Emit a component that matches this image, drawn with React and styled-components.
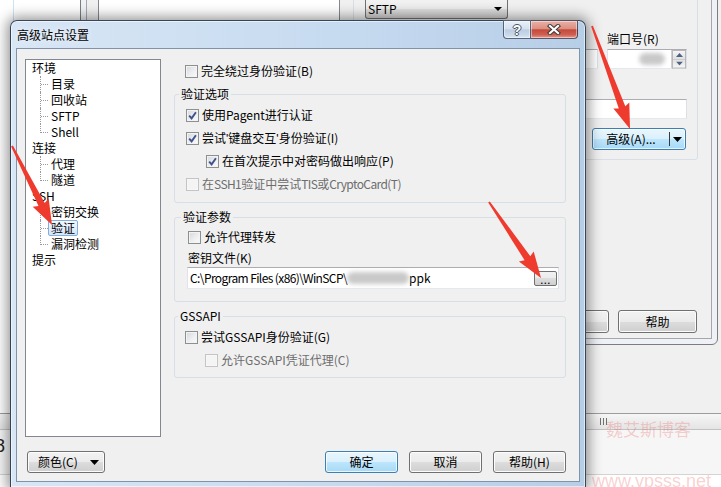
import React from "react";
import styled, { createGlobalStyle } from "styled-components";

const GlobalStyle = createGlobalStyle`
  html, body {
    margin: 0;
    padding: 0;
  }
  body {
    width: 721px;
    height: 487px;
    overflow: hidden;
    background: #fff;
    font-family: "Noto Sans CJK SC", "Noto Sans", sans-serif;
    font-size: 12px;
    line-height: 16px;
    color: #000;
  }
  * {
    box-sizing: border-box;
  }
`;

const Desktop = styled.div`
  position: relative;
  width: 721px;
  height: 487px;
  overflow: hidden;
  background: #fff;
`;

/* ---------- main WinSCP window behind everything ---------- */

const MainWindow = styled.div`
  position: absolute;
  inset: 0;
  display: grid;
  grid-template-rows: 413px 17px 45px 1fr;
`;

const FileArea = styled.div`
  display: grid;
  grid-template-columns: 586px 1fr;
`;

const FileList = styled.div`
  background: #fff;
  padding-left: 13px;
`;

const ColumnEdge = styled.div`
  height: 100%;
  border-left: 1px solid #cfe2f6;
`;

const SidePane = styled.div`
  background: #f0f0f0;
`;

const HScroll = styled.div`
  display: flex;
  align-items: center;
  padding-left: 600px;
  background: linear-gradient(#f6f6f6, #e4e4e4);
  border-top: 1px solid #9c9c9c;
  border-bottom: 1px solid #c2c2c2;
`;

const Grip = styled.span`
  width: 7px;
  height: 7px;
  background: repeating-linear-gradient(to right, #707070 0 1px, transparent 1px 3px);
`;

const StatusBand = styled.div`
  background: #f6f6f6;
  border-bottom: 1px solid #d4d4d4;
  padding-top: 6px;
  font-family: "Liberation Sans", sans-serif;
  font-size: 18px;
  line-height: 20px;
  color: #222;

  span {
    margin-left: -5px;
  }
`;

/* ---------- login dialog (inactive, behind) ---------- */

const LoginFrame = styled.div`
  position: absolute;
  left: 80px;
  top: -40px;
  width: 638px;
  height: 385px;
  padding: 29px 5px 5px;
  display: flex;
  border: 1px solid #7d7d7d;
  border-radius: 6px;
  background: #eef2f7;
`;

const LoginClient = styled.div`
  flex: 1;
  display: flex;
  flex-direction: column;
  border: 1px solid #a7a7a7;
  background: #f0f0f0;
`;

const LoginBody = styled.div`
  flex: 1;
  display: flex;
  align-items: flex-start;
`;

const SiteList = styled.div`
  width: 242px;
  height: 300px;
  margin-left: 11px;
  background: #fff;
  border: 1px solid #828790;
`;

const SessionGroup = styled.div`
  width: 345px;
  margin-left: 13px;
  padding: 8px 10px 9px 11px;
  border: 1px solid #d5dfe5;
  border-radius: 3px;
  display: flex;
  flex-direction: column;
`;

const FieldRow = styled.div`
  display: grid;
  grid-template-columns: ${(p) => p.$cols};
  column-gap: 9px;
  margin-top: ${(p) => p.$top || 0}px;
`;

const FieldLabel = styled.div`
  height: 16px;
  white-space: nowrap;
`;

const Edit = styled.div`
  height: 20px;
  display: flex;
  align-items: center;
  background: #fff;
  border: 1px solid;
  border-color: #abadb3 #dbdfe6 #e3e9ef #e2e3ea;
  padding-left: 2px;
`;

const Smudge = styled.span`
  display: inline-block;
  width: ${(p) => p.$w}px;
  height: 12px;
  margin-left: ${(p) => p.$ml || 0}px;
  border-radius: 6px;
  background: #c9c9c9;
  filter: blur(2px);
`;

const SpinButtons = styled.div`
  margin-left: auto;
  width: 15px;
  height: 100%;
  display: flex;
  flex-direction: column;
  border-left: 1px solid #d0d0d0;
`;

const SpinHalf = styled.div`
  flex: 1;
  display: flex;
  align-items: center;
  justify-content: center;
  background: linear-gradient(#f6f6f6, #e0e0e0);
  border: 1px solid #b8b8b8;
  transform: ${(p) => (p.$down ? "scaleY(-1)" : "none")};
  & + & {
    border-bottom: none;
  }
`;

const ComboBox = styled.div`
  width: 143px;
  height: 19px;
  display: flex;
  align-items: center;
  justify-content: space-between;
  padding: 0 5px 0 2px;
  border: 1px solid #707070;
  border-top: none;
  border-radius: 0 0 3px 3px;
  background: linear-gradient(#f2f2f2 0%, #ebebeb 50%, #dddddd 50%, #cfcfcf 100%);
`;

const SplitButton = styled.div`
  align-self: flex-end;
  margin-top: 9px;
  margin-right: 1px;
  width: 94px;
  height: 22px;
  display: flex;
  border: 1px solid #3c7fb1;
  border-radius: 3px;
  background: linear-gradient(#eaf6fd 0%, #d9f0fc 50%, #bee6fd 50%, #a7d9f5 100%);
  box-shadow: inset 0 0 0 1px rgba(255, 255, 255, 0.7);
`;

const SplitMain = styled.div`
  flex: 1;
  display: flex;
  align-items: center;
  justify-content: center;
  border-right: 1px solid #3a3a3a;
  margin: 3px 0;
`;

const SplitArrow = styled.div`
  width: 15px;
  display: flex;
  align-items: center;
  justify-content: center;
`;

const LoginButtons = styled.div`
  display: flex;
  justify-content: flex-end;
  gap: 9px;
  padding: 0 14px 5px;
`;

/* ---------- shared win7 widgets ---------- */

const PushButton = styled.div`
  width: ${(p) => p.$w}px;
  height: ${(p) => p.$h || 22}px;
  display: flex;
  align-items: center;
  justify-content: center;
  border: 1px solid ${(p) => (p.$default ? "#3c7fb1" : "#707070")};
  border-radius: 3px;
  background: ${(p) =>
    p.$default
      ? "linear-gradient(#eaf6fd 0%, #d9f0fc 50%, #bee6fd 50%, #a7d9f5 100%)"
      : "linear-gradient(#f2f2f2 0%, #ebebeb 50%, #dddddd 50%, #cfcfcf 100%)"};
  box-shadow: inset 0 0 0 1px
    ${(p) => (p.$default ? "rgba(255,255,255,0.75)" : "#fcfcfc")};
  white-space: nowrap;
`;

const DropTriangle = ({ w = 9, h = 5, color = "#000" }) => (
  <svg width={w} height={h} viewBox={`0 0 ${w} ${h}`}>
    <polygon points={`0,0 ${w},0 ${w / 2},${h}`} fill={color} />
  </svg>
);

const UpTriangle = () => (
  <svg width="7" height="4" viewBox="0 0 7 4">
    <polygon points="0,4 7,4 3.5,0" fill="#4d6185" />
  </svg>
);

/* ---------- main dialog ---------- */

const Dialog = styled.div`
  position: absolute;
  left: 10px;
  top: 20px;
  width: 576px;
  height: 468px;
  padding: 0 5px 5px;
  display: flex;
  flex-direction: column;
  border: 1px solid rgba(28, 42, 60, 0.85);
  border-radius: 7px 7px 0 0;
  background: linear-gradient(to right, #d8e6f5 0%, #c7dbf0 55%, #b7cee7 100%);
  box-shadow: 0 0 13px 3px rgba(0, 0, 0, 0.42),
    inset 0 0 0 1px rgba(255, 255, 255, 0.55);
`;

const TitleBar = styled.div`
  height: 27px;
  display: flex;
  justify-content: space-between;
`;

const TitleText = styled.div`
  align-self: center;
  padding-left: 1px;
  text-shadow: 0 0 6px rgba(255, 255, 255, 0.95);
`;

const CaptionGroup = styled.div`
  display: flex;
  height: 19px;
  margin-top: -1px;
  margin-right: 2px;
`;

const CaptionButton = styled.div`
  width: ${(p) => (p.$close ? 47 : 28)}px;
  display: flex;
  align-items: center;
  justify-content: center;
  border: 1px solid rgba(40, 55, 80, 0.75);
  border-left: ${(p) => (p.$close ? "none" : "1px solid rgba(40,55,80,0.75)")};
  border-radius: ${(p) => (p.$close ? "0 0 4px 0" : "0 0 0 4px")};
  background: ${(p) =>
    p.$close
      ? "linear-gradient(#eab0a6 0%, #dc8f83 45%, #c54a3b 52%, #cf5f50 80%, #e39b90 100%)"
      : "linear-gradient(#e9f0f8 0%, #d5e1ee 45%, #bccde1 52%, #c8d8ea 80%, #dbe6f2 100%)"};
  box-shadow: inset 0 0 0 1px rgba(255, 255, 255, 0.45);
`;

const HelpGlyph = styled.span`
  font-family: "Liberation Sans", sans-serif;
  font-weight: bold;
  font-size: 14px;
  line-height: 14px;
  color: #fff;
  text-shadow: 1px 0 #4a5566, -1px 0 #4a5566, 0 1px #4a5566, 0 -1px #4a5566;
`;

const CloseGlyph = () => (
  <svg width="14" height="11" viewBox="0 0 14 11">
    <path d="M3 2 L11 9 M11 2 L3 9" stroke="#3b3b3b" strokeWidth="4.2" strokeLinecap="square" />
    <path d="M3 2 L11 9 M11 2 L3 9" stroke="#fff" strokeWidth="2.2" strokeLinecap="square" />
  </svg>
);

const Client = styled.div`
  flex: 1;
  display: grid;
  grid-template-columns: 136px 1fr;
  grid-template-rows: 378px 22px;
  column-gap: 13px;
  row-gap: 14px;
  padding: 10px 13px 0 8px;
  border: 1px solid #7f93aa;
  background: #f0f0f0;
`;

/* tree */

const Tree = styled.div`
  background: #fff;
  border: 1px solid #828790;
  padding-left: 6px;
`;

const TreeRoot = styled.div`
  height: 16px;
  line-height: 16px;
`;

const TreeBranch = styled.div`
  margin-left: 8px;
`;

const TreeLeaf = styled.div`
  position: relative;
  height: 16px;
  padding-left: 8px;
  display: flex;
  align-items: center;

  &::before {
    content: "";
    position: absolute;
    left: 1px;
    top: 8px;
    width: 7px;
    border-top: 1px dotted #9a9a9a;
  }
  &::after {
    content: "";
    position: absolute;
    left: 0;
    top: 0;
    height: ${(p) => (p.$last ? 9 : 16)}px;
    border-left: 1px dotted #9a9a9a;
  }
`;

const LeafLabel = styled.span`
  height: 16px;
  line-height: 14px;
  padding: 0 2px;
  border: 1px solid ${(p) => (p.$selected ? "#84acdd" : "transparent")};
  border-radius: 2px;
  background: ${(p) => (p.$selected ? "linear-gradient(#f2f8fe, #d3e6fb)" : "none")};
`;

/* right side */

const Panel = styled.div`
  display: flex;
  flex-direction: column;
`;

const CheckRow = styled.div`
  height: 16px;
  display: flex;
  align-items: center;
  gap: 3px;
  padding-left: ${(p) => p.$indent || 0}px;
  margin-top: ${(p) => p.$top || 0}px;
  color: ${(p) => (p.$disabled ? "#6d6d6d" : "#000")};
  white-space: nowrap;
`;

const Quote = styled.span`
  font-family: "Liberation Sans", sans-serif;
`;

const Latin = styled.span`
  letter-spacing: -0.6px;
`;

const Box = styled.span`
  flex: none;
  width: 13px;
  height: 13px;
  display: flex;
  align-items: center;
  justify-content: center;
  border: 1px solid ${(p) => (p.$disabled ? "#c4c4c4" : "#8e8f8f")};
  background: ${(p) =>
    p.$disabled
      ? "#f4f4f4"
      : "linear-gradient(135deg, #d4d7dc 0%, #eceef0 55%, #fbfbfb 100%)"};
  box-shadow: inset 0 0 0 1px ${(p) => (p.$disabled ? "#f7f7f7" : "#f3f3f3")};
`;

const Tick = () => (
  <svg width="11" height="11" viewBox="0 0 11 11">
    <path d="M2.2 5.6 L4.6 8.4 L8.9 2.2" fill="none" stroke="#3f5289" strokeWidth="1.9" />
  </svg>
);

const Check = ({ checked, disabled, indent, top, children }) => (
  <CheckRow $indent={indent} $top={top} $disabled={disabled}>
    <Box $disabled={disabled}>{checked && <Tick />}</Box>
    <span>{children}</span>
  </CheckRow>
);

const Group = styled.fieldset`
  margin: ${(p) => p.$top || 0}px 0 0;
  padding: ${(p) => p.$pt}px 6px ${(p) => p.$pb}px ${(p) => p.$pad}px;
  border: 1px solid #d5dfe5;
  border-radius: 3px;
  display: flex;
  flex-direction: column;
  min-width: 0;
`;

const Legend = styled.legend`
  height: 16px;
  padding: 0 2px;
  margin-left: ${(p) => 4 - p.$pad}px;
  line-height: 16px;
`;

const PlainLabel = styled.div`
  height: 16px;
  margin-top: ${(p) => p.$top || 0}px;
`;

const PathEdit = styled.div`
  height: 22px;
  margin: 1px 0 0 -1px;
  display: flex;
  align-items: center;
  padding-left: 2px;
  background: #fff;
  border: 1px solid;
  border-color: #abadb3 #dbdfe6 #e3e9ef #e2e3ea;
  white-space: nowrap;
`;

const BrowseButton = styled.div`
  margin-left: auto;
  margin-right: 1px;
  width: 23px;
  height: 15px;
  display: flex;
  justify-content: center;
  align-items: flex-end;
  border: 1px solid #707070;
  border-radius: 2px;
  background: linear-gradient(#f2f2f2 0%, #ebebeb 50%, #dddddd 50%, #cfcfcf 100%);
  font-size: 11px;
  line-height: 12px;
  letter-spacing: 0.5px;
`;

const ButtonRow = styled.div`
  grid-column: 1 / -1;
  display: flex;
  gap: 11px;
`;

const ColorButton = styled(PushButton)`
  margin-left: 2px;
  justify-content: space-between;
  padding: 0 5px 0 10px;
`;

const Spacer = styled.div`
  flex: 1;
`;

/* ---------- overlays ---------- */

const Overlay = styled.svg`
  position: absolute;
  left: 0;
  top: 0;
  pointer-events: none;
`;

const Watermark = styled.div`
  position: absolute;
  left: ${(p) => p.$x}px;
  top: ${(p) => p.$y}px;
  font-family: ${(p) => (p.$latin ? '"Liberation Sans", sans-serif' : '"Noto Sans CJK SC", sans-serif')};
  font-size: ${(p) => p.$size}px;
  line-height: 22px;
  color: rgba(236, 110, 110, 0.32);
  white-space: nowrap;
  pointer-events: none;
`;

const Arrow = ({ from, to, head = 22, headW = 17, tail = 2, neck = 7 }) => {
  const [x1, y1] = from;
  const [x2, y2] = to;
  const len = Math.hypot(x2 - x1, y2 - y1);
  const ux = (x2 - x1) / len;
  const uy = (y2 - y1) / len;
  const nx = -uy;
  const ny = ux;
  const bx = x2 - ux * head;
  const by = y2 - uy * head;
  const pt = (x, y) => `${x.toFixed(1)},${y.toFixed(1)}`;
  const points = [
    pt(x1 + (nx * tail) / 2, y1 + (ny * tail) / 2),
    pt(bx + (nx * neck) / 2, by + (ny * neck) / 2),
    pt(bx + (nx * headW) / 2 - ux * 2, by + (ny * headW) / 2 - uy * 2),
    pt(x2, y2),
    pt(bx - (nx * headW) / 2 - ux * 2, by - (ny * headW) / 2 - uy * 2),
    pt(bx - (nx * neck) / 2, by - (ny * neck) / 2),
    pt(x1 - (nx * tail) / 2, y1 - (ny * tail) / 2),
  ].join(" ");
  return <polygon points={points} fill="#ef3a2e" />;
};

const treeData = [
  { label: "环境", children: ["目录", "回收站", "SFTP", "Shell"] },
  { label: "连接", children: ["代理", "隧道"] },
  { label: "SSH", children: ["密钥交换", "验证", "漏洞检测"] },
  { label: "提示", children: [] },
];

const App = () => {
  return (
    <Desktop>
      <GlobalStyle />

      <MainWindow>
        <FileArea>
          <FileList>
            <ColumnEdge />
          </FileList>
          <SidePane />
        </FileArea>
        <HScroll>
          <Grip />
        </HScroll>
        <StatusBand>
          <span>8</span>
        </StatusBand>
        <div />
      </MainWindow>

      <LoginFrame>
        <LoginClient>
          <LoginBody>
            <SiteList />
            <SessionGroup>
              <ComboBox>
                <span>SFTP</span>
                <DropTriangle w={8} h={4} />
              </ComboBox>
              <FieldRow $cols="233px 80px" $top={12}>
                <FieldLabel>主机名(H):</FieldLabel>
                <FieldLabel>端口号(R)</FieldLabel>
              </FieldRow>
              <FieldRow $cols="233px 80px" $top={2}>
                <Edit />
                <Edit>
                  <Smudge $w={26} $ml={29} />
                  <SpinButtons>
                    <SpinHalf>
                      <UpTriangle />
                    </SpinHalf>
                    <SpinHalf $down>
                      <UpTriangle />
                    </SpinHalf>
                  </SpinButtons>
                </Edit>
              </FieldRow>
              <FieldRow $cols="158px 1fr" $top={12}>
                <FieldLabel>用户名(U):</FieldLabel>
                <FieldLabel>密码(P):</FieldLabel>
              </FieldRow>
              <FieldRow $cols="158px 1fr" $top={2}>
                <Edit />
                <Edit />
              </FieldRow>
              <SplitButton>
                <SplitMain>高级(A)...</SplitMain>
                <SplitArrow>
                  <DropTriangle w={9} h={5} />
                </SplitArrow>
              </SplitButton>
            </SessionGroup>
          </LoginBody>
          <LoginButtons>
            <PushButton $w={79} $h={23}>登录</PushButton>
            <PushButton $w={79} $h={23}>关闭</PushButton>
            <PushButton $w={79} $h={23}>帮助</PushButton>
          </LoginButtons>
        </LoginClient>
      </LoginFrame>

      <Dialog>
        <TitleBar>
          <TitleText>高级站点设置</TitleText>
          <CaptionGroup>
            <CaptionButton>
              <HelpGlyph>?</HelpGlyph>
            </CaptionButton>
            <CaptionButton $close>
              <CloseGlyph />
            </CaptionButton>
          </CaptionGroup>
        </TitleBar>

        <Client>
          <Tree>
            {treeData.map((node) => (
              <div key={node.label}>
                <TreeRoot>{node.label}</TreeRoot>
                {node.children.length > 0 && (
                  <TreeBranch>
                    {node.children.map((child, i) => (
                      <TreeLeaf key={child} $last={i === node.children.length - 1}>
                        <LeafLabel $selected={child === "验证"}>{child}</LeafLabel>
                      </TreeLeaf>
                    ))}
                  </TreeBranch>
                )}
              </div>
            ))}
          </Tree>

          <Panel>
            <Check top={4} indent={11}>
              完全绕过身份验证(B)
            </Check>

            <Group $top={7} $pad={11} $pt={5} $pb={10}>
              <Legend $pad={11}>验证选项</Legend>
              <Check checked>使用Pagent进行认证</Check>
              <Check checked top={7}>
                尝试<Quote>'</Quote>键盘交互<Quote>'</Quote>身份验证(I)
              </Check>
              <Check checked top={7} indent={20}>
                在首次提示中对密码做出响应(P)
              </Check>
              <Check disabled top={7}>
                在<Latin>SSH1</Latin>验证中尝试<Latin>TIS</Latin>或<Latin>CryptoCard(T)</Latin>
              </Check>
            </Group>

            <Group $top={6} $pad={13} $pt={4} $pb={12}>
              <Legend $pad={11}>验证参数</Legend>
              <Check>允许代理转发</Check>
              <PlainLabel $top={5}>密钥文件(K)</PlainLabel>
              <PathEdit>
                <Latin>C:\Program Files (x86)\WinSCP\</Latin>
                <Smudge $w={62} />
                <span>ppk</span>
                <BrowseButton>...</BrowseButton>
              </PathEdit>
            </Group>

            <Group $top={6} $pad={10} $pt={5} $pb={9}>
              <Legend $pad={11}>GSSAPI</Legend>
              <Check>尝试GSSAPI身份验证(G)</Check>
              <Check disabled top={7} indent={20}>
                允许GSSAPI凭证代理(C)
              </Check>
            </Group>
          </Panel>

          <ButtonRow>
            <ColorButton $w={78}>
              <span>颜色(C)</span>
              <DropTriangle w={9} h={5} />
            </ColorButton>
            <Spacer />
            <PushButton $w={73} $default>
              确定
            </PushButton>
            <PushButton $w={73}>取消</PushButton>
            <PushButton $w={73}>帮助(H)</PushButton>
          </ButtonRow>
        </Client>
      </Dialog>

      <Watermark $x={606} $y={418} $size={17}>
        魏艾斯博客
      </Watermark>
      <Watermark $x={592} $y={470} $size={18} $latin>
        www.vpsss.net
      </Watermark>

      <Overlay width="721" height="487" viewBox="0 0 721 487">
        <Arrow from={[592, 26]} to={[630, 129]} head={23} headW={17} />
        <Arrow from={[489, 202]} to={[541, 278]} head={24} headW={18} />
        <Arrow from={[12, 146]} to={[52, 225]} head={23} headW={18} />
      </Overlay>
    </Desktop>
  );
};

export default App;
